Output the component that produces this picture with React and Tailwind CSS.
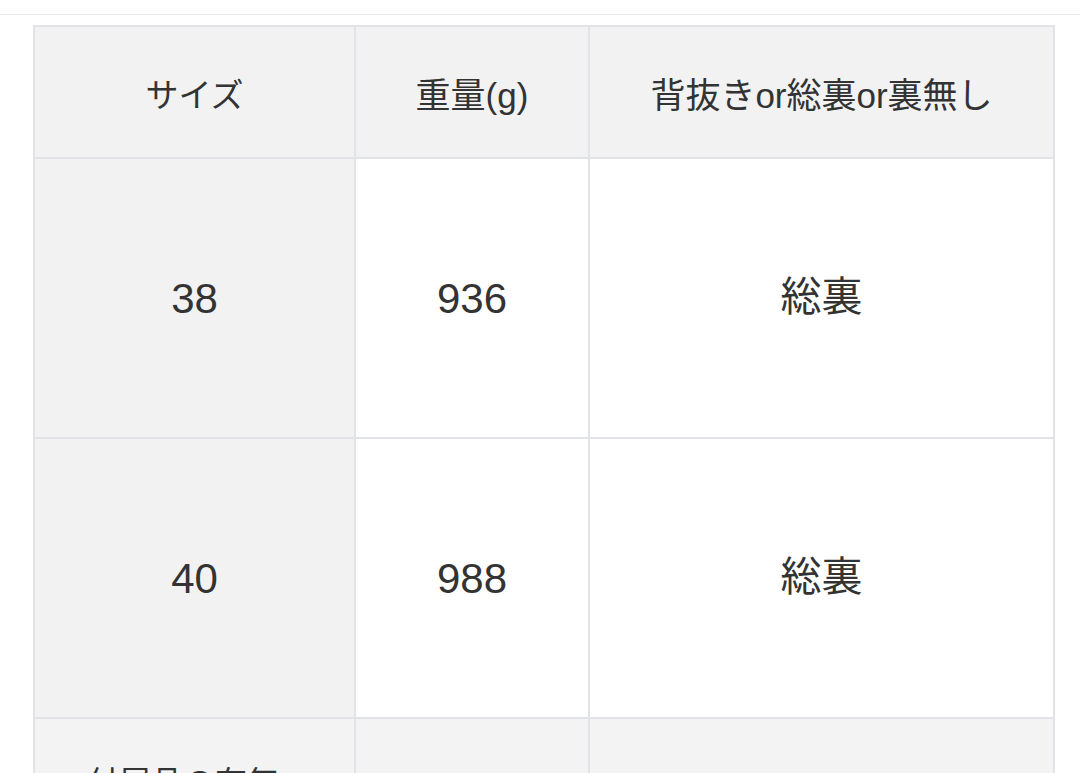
import React from "react";

const rows = [
  { size: "38", weight: "936", lining: "総裏" },
  { size: "40", weight: "988", lining: "総裏" },
];

const font = {
  fontFamily: '"Liberation Sans", "Noto Sans CJK JP", sans-serif',
};

const App = () => {
  return (
    <div className="w-[1080px] h-[773px] overflow-hidden bg-white text-[#333]" style={font}>
      {/* thin rule above the table */}
      <div className="h-[15px] border-b border-[#ececec]"></div>

      <div className="pl-[33px] pt-[10px]">
        <table className="border-collapse table-fixed w-[1020px]">
          <colgroup>
            <col className="w-[321px]" />
            <col className="w-[234px]" />
            <col className="w-[465px]" />
          </colgroup>
          <thead>
            <tr className="h-[132px] bg-[#f2f2f3]">
              <th className="border-2 border-[#e2e3e7] font-normal text-[33px] text-center pt-[8px]">
                サイズ
              </th>
              <th className="border-2 border-[#e2e3e7] font-normal text-[35px] text-center pt-[8px]">
                重量(g)
              </th>
              <th className="border-2 border-[#e2e3e7] font-normal text-[35px] text-center pt-[8px]">
                背抜きor総裏or裏無し
              </th>
            </tr>
          </thead>
          <tbody>
            {rows.map((item, index) => (
              <tr key={index} className="h-[280px]">
                <td className="border-2 border-[#e2e3e7] bg-[#f2f2f3] text-[42px] text-center">
                  {item.size}
                </td>
                <td className="border-2 border-[#e2e3e7] bg-white text-[42px] text-center">
                  {item.weight}
                </td>
                <td className="border-2 border-[#e2e3e7] bg-white text-[41px] text-center">
                  {item.lining}
                </td>
              </tr>
            ))}
            <tr className="h-[280px] bg-[#f3f3f4]">
              <td className="border-2 border-[#e2e3e7] align-top pt-[42px] pl-[52px] text-[32px] leading-[44px]">
                付属品の有無
              </td>
              <td className="border-2 border-[#e2e3e7]"></td>
              <td className="border-2 border-[#e2e3e7]"></td>
            </tr>
          </tbody>
        </table>
      </div>
    </div>
  );
};

export default App;
